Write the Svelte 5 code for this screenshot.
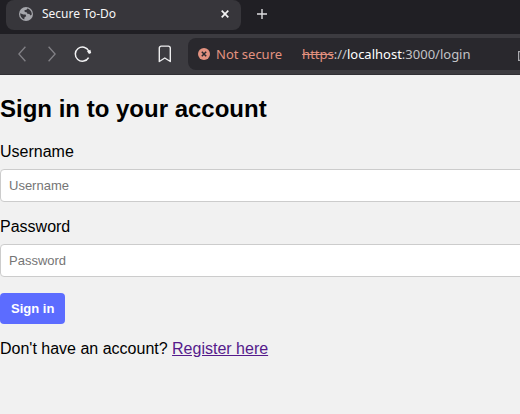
<script>
  let username = $state('');
  let password = $state('');
</script>

<div class="browser">
  <div class="tabs">
    <div class="tab">
      <svg class="globe" width="14" height="14" viewBox="0 0 14 14" aria-hidden="true">
        <circle cx="7" cy="7" r="7" fill="#a5a6ab" />
        <path d="M1.2 6.2 L4.3 7.4 L6.6 7.6 L7.2 9.2 L5.6 10.2 L5.2 12.4 C2.6 11.6 1 9 1.2 6.2Z" fill="#37363b" />
        <path d="M8.2 1.4 L7.6 2.8 L5.4 3.2 L5.8 5 L7.6 5.2 L8.4 6.8 L10.4 7 L11.4 8.4 L12.8 7.6 C13 4.4 11 2 8.2 1.4Z" fill="#37363b" />
      </svg>
      <span class="title">Secure To-Do</span>
      <button class="icon" aria-label="Close tab">
        <svg width="8" height="8" viewBox="0 0 8 8"><path d="M.7.7l6.6 6.6M7.3.7L.7 7.3" stroke="#f4f4f5" stroke-width="1.7" /></svg>
      </button>
    </div>
    <button class="icon plus" aria-label="New tab">
      <svg width="10" height="10" viewBox="0 0 10 10"><path d="M5 0v10M0 5h10" stroke="#dddde0" stroke-width="1.4" /></svg>
    </button>
  </div>

  <div class="toolbar">
    <div class="nav">
      <button class="icon" aria-label="Back">
        <svg width="8" height="16" viewBox="0 0 8 16"><path d="M7.4.7L.9 8l6.5 7.3" fill="none" stroke="#828186" stroke-width="1.3" /></svg>
      </button>
      <button class="icon" aria-label="Forward">
        <svg width="8" height="16" viewBox="0 0 8 16"><path d="M.6.7L7.1 8 .6 15.3" fill="none" stroke="#828186" stroke-width="1.3" /></svg>
      </button>
      <button class="icon reload" aria-label="Reload">
        <svg width="18" height="18" viewBox="0 0 18 18">
          <path d="M14.8 6A7.1 7.1 0 1 0 14.6 12.6" fill="none" stroke="#f3f3f4" stroke-width="1.5" />
          <path d="M13 6.3L16.4 4.8 17.2 8 15 9Z" fill="#f3f3f4" />
        </svg>
      </button>
    </div>
    <button class="icon" aria-label="Bookmark">
      <svg width="14" height="18" viewBox="0 0 14 18"><path d="M1.3 16.5V3A1.9 1.9 0 0 1 3.2 1.1h7.2A1.9 1.9 0 0 1 12.3 3v13.5L6.8 13Z" fill="none" stroke="#ededee" stroke-width="1.4" stroke-linejoin="round" /></svg>
    </button>
    <div class="address">
      <svg class="warning" width="12" height="12" viewBox="0 0 12 12" aria-hidden="true">
        <circle cx="6" cy="6" r="6" fill="#e39280" />
        <path d="M3.8 3.8l4.4 4.4M8.2 3.8L3.8 8.2" stroke="#29282d" stroke-width="1.5" />
      </svg>
      <span class="insecure">Not secure</span>
      <span class="url"><s>https</s>://<b>localhost</b>:3000/login</span>
      <svg class="edge" width="2" height="10" viewBox="0 0 2 10" aria-hidden="true"><path d="M2 .6H.6v8.8H2" fill="none" stroke="#aaaaae" stroke-width="1.2" /></svg>
    </div>
  </div>
</div>

<main>
  <h2>Sign in to your account</h2>
  <form onsubmit={(e) => e.preventDefault()}>
    <label for="username">Username</label>
    <input id="username" type="text" placeholder="Username" bind:value={username} />
    <label for="password">Password</label>
    <input id="password" type="password" placeholder="Password" bind:value={password} />
    <button class="submit" type="submit">Sign in</button>
  </form>
  <p>Don't have an account? <a href="#register">Register here</a></p>
</main>

<style>
  :global(body) {
    margin: 0;
    background: #f1f1f1;
    overflow-x: hidden;
  }
  .browser {
    font-family: "Noto Sans", "Open Sans", sans-serif;
    background: #201f24;
  }
  .icon {
    display: flex;
    padding: 0;
    border: 0;
    background: none;
  }
  .icon svg, .globe, .warning, .edge {
    display: block;
    flex: none;
  }
  .tabs {
    display: flex;
    align-items: flex-start;
    height: 34px;
    padding-left: 6px;
  }
  .tab {
    display: flex;
    align-items: center;
    box-sizing: border-box;
    width: 235px;
    height: 30px;
    padding: 0 12px 2px 13px;
    border-radius: 8px;
    background: #37363b;
  }
  .title {
    flex: 1;
    margin-left: 9px;
    color: #f6f6f7;
    font-size: 12px;
    line-height: 16px;
  }
  .plus {
    margin: 9px 0 0 16px;
  }
  .toolbar {
    display: flex;
    align-items: center;
    justify-content: space-between;
    height: 40px;
    padding-left: 18px;
    background: #3c3b40;
    border-bottom: 1px solid #302f34;
  }
  .nav {
    display: flex;
    align-items: center;
    gap: 22px;
    flex: 1;
  }
  .reload {
    margin-left: -4px;
  }
  .address {
    display: flex;
    align-items: center;
    box-sizing: border-box;
    width: calc(100% - 170px);
    height: 32px;
    margin-left: 16px;
    padding-left: 10px;
    border-radius: 8px 0 0 8px;
    background: #29282d;
    font-size: 13px;
    line-height: 18px;
    white-space: nowrap;
  }
  .insecure, s {
    color: #e39280;
  }
  .insecure {
    margin: 0 20px 0 6px;
  }
  .url {
    color: #c3c3c7;
  }
  .url b {
    color: #fff;
    font-weight: 400;
  }
  .edge {
    margin: 4px 0 0 auto;
  }
  main {
    padding-top: 20px;
    color: #000;
    font: 16px/18px "Liberation Sans", Arial, sans-serif;
  }
  h2 {
    margin: 0 0 20px;
    font-size: 24px;
    line-height: 27px;
  }
  label {
    display: block;
    margin-bottom: 7px;
    line-height: 20px;
  }
  input {
    display: block;
    box-sizing: border-box;
    width: calc(100% + 8px);
    height: 33px;
    margin-bottom: 15px;
    padding: 8px;
    border: 1px solid #ccc;
    border-radius: 4px;
    background: #fff;
    font: 13px/15px "Liberation Sans", Arial, sans-serif;
  }
  input::placeholder {
    color: #757575;
  }
  .submit {
    display: block;
    margin-top: 16px;
    padding: 8px 11px;
    border: 0;
    border-radius: 4px;
    background: #5c6cff;
    color: #fff;
    font: bold 13px/15px "Liberation Sans", Arial, sans-serif;
  }
  p {
    margin: 16px 0;
  }
  a {
    color: #551a8b;
  }
</style>
